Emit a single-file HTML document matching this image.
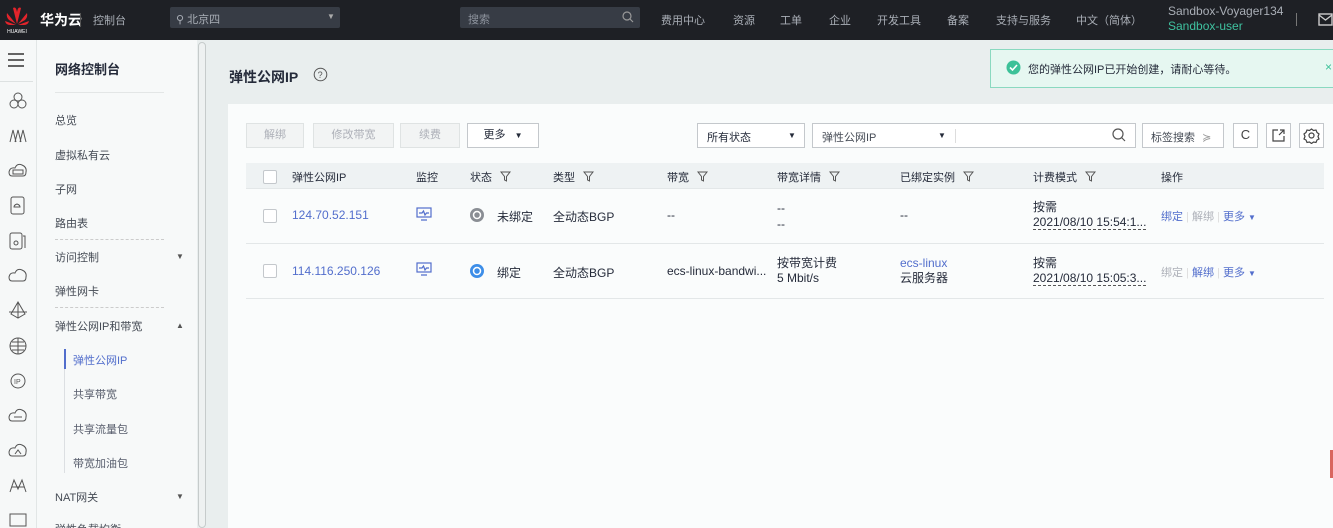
<!DOCTYPE html>
<html><head><meta charset="utf-8"><style>
*{box-sizing:border-box;margin:0;padding:0}
html,body{width:1333px;height:528px;overflow:hidden}
body{position:relative;background:#e9eeee;font-family:"Liberation Sans","Noto Sans CJK SC",sans-serif;font-size:12px;color:#252b3a}
.a{position:absolute;white-space:nowrap}
.top{left:0;top:0;width:1333px;height:40px;background:#1e2025}
.nav{color:#a9aeb6;font-size:11px;top:12px}
.side{left:0;top:40px;width:37px;height:488px;background:#f6f8f8;border-right:1px solid #e2e6e6}
.menu{left:37px;top:40px;width:160px;height:488px;background:#f7f9f9}
.mi{left:55px;font-size:11px;color:#454b55}
.sub{left:73px;font-size:11px;color:#575d6c}
.panel{left:228px;top:104px;width:1105px;height:424px;background:#fafcfc}
.btn{top:123px;height:25px;border:1px solid #dfe3e3;background:#f2f4f4;color:#adb0b8;text-align:center;line-height:23px;font-size:11px}
.th{top:163px;left:246px;width:1078px;height:26px;background:#eef2f3}
.h{top:169px;font-size:11px;color:#252b3a}
.row{left:246px;width:1078px;border-bottom:1px solid #e3e7e8}
.cb{width:14px;height:14px;border:1px solid #c4c8cc;background:#fff;border-radius:2px}
.lnk{color:#526ecc}
.f{display:inline-block;margin-left:8px;width:11px;height:11px;vertical-align:-1px}
</style></head><body>
<div class="a top"></div>
<svg class="a" style="left:4px;top:4px" width="26" height="30" viewBox="0 0 26 30"><g fill="#e3242b"><path d="M13 20 L9 4 Q12 2 13 8Z"/><path d="M13 20 L17 4 Q14 2 13 8Z"/><path d="M12 20 L3 9 Q2 13 5 16Z"/><path d="M14 20 L23 9 Q24 13 21 16Z"/><path d="M12 21 L1 17 Q2 21 6 21Z"/><path d="M14 21 L25 17 Q24 21 20 21Z"/></g><text x="13" y="29" font-size="5" fill="#fff" text-anchor="middle" font-family="Liberation Sans">HUAWEI</text></svg>
<div class="a" style="left:40px;top:10px;color:#fff;font-size:14px;font-weight:bold">华为云</div>
<div class="a" style="left:80px;top:13px;width:1px;height:14px;background:#555"></div>
<div class="a nav" style="left:93px">控制台</div>
<div class="a" style="left:170px;top:7px;width:170px;height:21px;background:#373c45;border-radius:2px"></div>
<div class="a" style="left:176px;top:11px;color:#a9aeb6;font-size:11px">⚲ 北京四</div>
<div class="a" style="left:327px;top:12px;color:#aaa;font-size:8px">▼</div>
<div class="a" style="left:460px;top:7px;width:180px;height:21px;background:#373c45;border-radius:2px"></div>
<div class="a" style="left:468px;top:11px;color:#8d939d;font-size:11px">搜索</div>
<svg class="a" style="left:622px;top:11px" width="12" height="12"><circle cx="5" cy="5" r="4" fill="none" stroke="#999" stroke-width="1.2"/><path d="M8 8l3 3" stroke="#999" stroke-width="1.2"/></svg>
<div class="a nav" style="left:661px">费用中心</div>
<div class="a nav" style="left:733px">资源</div>
<div class="a nav" style="left:780px">工单</div>
<div class="a nav" style="left:829px">企业</div>
<div class="a nav" style="left:877px">开发工具</div>
<div class="a nav" style="left:947px">备案</div>
<div class="a nav" style="left:996px">支持与服务</div>
<div class="a nav" style="left:1076px">中文（简体）</div>
<div class="a" style="left:1168px;top:4px;color:#a9aeb6;font-size:12px">Sandbox-Voyager134</div>
<div class="a" style="left:1168px;top:19px;color:#3fc2a0;font-size:12px">Sandbox-user</div>
<div class="a" style="left:1296px;top:13px;width:1px;height:13px;background:#777"></div>
<svg class="a" style="left:1318px;top:13px" width="15" height="13"><rect x="1" y="1" width="13" height="11" fill="none" stroke="#ccc" stroke-width="1.4"/><path d="M1 2l6.5 5 6.5-5" fill="none" stroke="#ccc" stroke-width="1.3"/></svg>

<div class="a side"></div>
<svg class="a" style="left:7px;top:52px" width="18" height="16"><path d="M1 2h16M1 8h16M1 14h16" stroke="#333" stroke-width="1.6"/></svg>
<div class="a" style="left:0;top:81px;width:33px;height:1px;background:#dde1e1"></div>
<svg class="a" style="left:0;top:90px" width="36" height="440" fill="none" stroke="#555" stroke-width="1">
<g transform="translate(9,2)"><circle cx="9" cy="5" r="4"/><circle cx="5" cy="12" r="4"/><circle cx="13" cy="12" r="4"/></g>
<g transform="translate(9,37)"><path d="M1 15 L4 3 L7 15 M6 15 L9 3 L12 15 M11 15 L14 3 L17 15"/></g>
<g transform="translate(9,72)"><path d="M3 14 Q0 14 0 10 Q1 5 6 6 Q8 1 13 3 Q18 5 17 10 Q17 14 14 14Z"/><rect x="4" y="8" width="10" height="4"/></g>
<g transform="translate(10,107)"><rect x="1" y="0" width="13" height="17" rx="2"/><path d="M4 10q0-2 3-3 3 1 3 3z"/></g>
<g transform="translate(9,142)"><rect x="1" y="1" width="12" height="16" rx="2"/><path d="M14 4h2v12"/><circle cx="7" cy="11" r="2"/></g>
<g transform="translate(9,177)"><path d="M3 14 Q0 14 0 10 Q1 5 6 6 Q8 1 13 3 Q18 5 17 10 Q17 14 14 14Z"/></g>
<g transform="translate(9,212)"><path d="M9 0 L2 12 L9 16 L16 12 Z M9 0 V16 M0 10 H18"/></g>
<g transform="translate(9,247)"><circle cx="9" cy="9" r="8"/><path d="M1 9h16M9 1v16M3 5h12M3 13h12"/></g>
<g transform="translate(9,282)"><circle cx="9" cy="9" r="7"/><text x="5" y="12" font-size="7" fill="#555" stroke="none">IP</text></g>
<g transform="translate(9,317)"><path d="M3 14 Q0 14 0 10 Q1 5 6 6 Q8 1 13 3 Q18 5 17 10 Q17 14 14 14Z"/><path d="M5 10h8"/></g>
<g transform="translate(9,352)"><path d="M3 14 Q0 14 0 10 Q1 5 6 6 Q8 1 13 3 Q18 5 17 10 Q17 14 14 14Z"/><path d="M6 12l3-4 3 4"/></g>
<g transform="translate(9,387)"><path d="M1 15 L5 3 L9 12 L13 3 L17 15 M3 10 h12"/></g>
<g transform="translate(9,422)"><rect x="1" y="2" width="16" height="12"/></g>
</svg>

<div class="a menu"></div>
<div class="a" style="left:55px;top:59px;font-size:13px;font-weight:bold;color:#252b3a">网络控制台</div>
<div class="a" style="left:55px;top:92px;width:109px;height:1px;background:#e3e6e6"></div>
<div class="a mi" style="top:112px">总览</div>
<div class="a mi" style="top:147px">虚拟私有云</div>
<div class="a mi" style="top:181px">子网</div>
<div class="a mi" style="top:215px">路由表</div>
<div class="a" style="left:55px;top:239px;width:109px;border-top:1px dashed #ccc"></div>
<div class="a mi" style="top:249px">访问控制</div><div class="a" style="left:176px;top:252px;font-size:8px;color:#555">▼</div>
<div class="a mi" style="top:283px">弹性网卡</div>
<div class="a" style="left:55px;top:307px;width:109px;border-top:1px dashed #ccc"></div>
<div class="a mi" style="top:318px">弹性公网IP和带宽</div><div class="a" style="left:176px;top:321px;font-size:8px;color:#555">▲</div>
<div class="a" style="left:64px;top:349px;width:1px;height:124px;background:#dcdfe2"></div>
<div class="a" style="left:64px;top:349px;width:2px;height:20px;background:#526ecc"></div>
<div class="a sub" style="top:352px;color:#526ecc">弹性公网IP</div>
<div class="a sub" style="top:386px">共享带宽</div>
<div class="a sub" style="top:421px">共享流量包</div>
<div class="a sub" style="top:455px">带宽加油包</div>
<div class="a mi" style="top:489px">NAT网关</div><div class="a" style="left:176px;top:492px;font-size:8px;color:#555">▼</div>
<div class="a mi" style="top:521px">弹性负载均衡</div>
<div class="a" style="left:198px;top:42px;width:8px;height:486px;border:1px solid #c6cbcb;border-radius:4px;background:#eef1f1"></div>

<div class="a" style="left:229px;top:67px;font-size:14px;font-weight:bold;color:#252b3a">弹性公网IP</div>
<svg class="a" style="left:313px;top:67px" width="15" height="15"><circle cx="7.5" cy="7.5" r="6.3" fill="none" stroke="#555" stroke-width="1"/><text x="4.6" y="11" font-size="9" fill="#555" font-family="Liberation Sans">?</text></svg>

<div class="a" style="left:990px;top:49px;width:343px;height:39px;background:#e6f7f1;border:1px solid #8ad9c0;border-right:none"></div>
<svg class="a" style="left:1006px;top:60px" width="15" height="15"><circle cx="7.5" cy="7.5" r="7" fill="#3cc198"/><path d="M4 7.5l2.5 2.5 4.5-5" stroke="#fff" stroke-width="1.6" fill="none"/></svg>
<div class="a" style="left:1028px;top:61px;font-size:11px;color:#252b3a">您的弹性公网IP已开始创建，请耐心等待。</div>
<div class="a" style="left:1325px;top:60px;color:#3cc198;font-size:12px">×</div>

<div class="a panel"></div>
<div class="a btn" style="left:246px;width:58px">解绑</div>
<div class="a btn" style="left:313px;width:81px">修改带宽</div>
<div class="a btn" style="left:400px;width:60px">续费</div>
<div class="a btn" style="left:467px;width:72px;background:#fff;border-color:#c4c8cc;color:#252b3a">更多 <span style="font-size:8px;margin-left:6px">▼</span></div>

<div class="a" style="left:697px;top:123px;width:108px;height:25px;border:1px solid #c4c8cc;background:#fff"></div>
<div class="a" style="left:707px;top:129px;font-size:11px">所有状态</div><div class="a" style="left:788px;top:131px;font-size:8px">▼</div>
<div class="a" style="left:812px;top:123px;width:324px;height:25px;border:1px solid #c4c8cc;background:#fff"></div>
<div class="a" style="left:822px;top:129px;font-size:11px;color:#454b55">弹性公网IP</div><div class="a" style="left:938px;top:131px;font-size:8px">▼</div>
<div class="a" style="left:955px;top:129px;width:1px;height:14px;background:#ddd"></div>
<svg class="a" style="left:1112px;top:128px" width="14" height="14"><circle cx="6" cy="6" r="5" fill="none" stroke="#555" stroke-width="1.2"/><path d="M9.5 9.5l3.5 3.5" stroke="#555" stroke-width="1.2"/></svg>
<div class="a" style="left:1142px;top:123px;width:82px;height:25px;border:1px solid #c4c8cc;background:#fff"></div>
<div class="a" style="left:1151px;top:129px;font-size:11px;color:#454b55">标签搜索 <span style="color:#999;margin-left:4px">≽</span></div>
<div class="a" style="left:1233px;top:123px;width:25px;height:25px;border:1px solid #c4c8cc;background:#fff;text-align:center;line-height:22px;font-size:13px;color:#444">C</div>
<div class="a" style="left:1266px;top:123px;width:25px;height:25px;border:1px solid #c4c8cc;background:#fff"></div>
<svg class="a" style="left:1271px;top:128px" width="15" height="15" fill="none" stroke="#444" stroke-width="1.2"><path d="M7 2H2v11h11V8M9 2h4v4M13 2L8 7"/></svg>
<div class="a" style="left:1299px;top:123px;width:25px;height:25px;border:1px solid #c4c8cc;background:#fff"></div>
<svg class="a" style="left:1303px;top:127px" width="17" height="17" fill="none" stroke="#444" stroke-width="1.2"><circle cx="8.5" cy="8.5" r="2.5"/><path d="M8.5 2l2 1.5 2.5-.5 1 2.5 2 1.5-1 2.5 1 2.5-2 1-1 2.5-2.5-.5-2 1.5-2-1.5-2.5.5-1-2.5-2-1 1-2.5-1-2.5 2-1.5 1-2.5 2.5.5z"/></svg>

<div class="a th"></div>
<div class="a cb" style="left:263px;top:170px"></div>
<div class="a h" style="left:292px">弹性公网IP</div>
<div class="a h" style="left:416px">监控</div>
<div class="a h" style="left:470px">状态<svg class="f" viewBox="0 0 11 11"><path d="M1 1h9L6.5 5.5V10L4.5 9V5.5z" fill="none" stroke="#555"/></svg></div>
<div class="a h" style="left:553px">类型<svg class="f" viewBox="0 0 11 11"><path d="M1 1h9L6.5 5.5V10L4.5 9V5.5z" fill="none" stroke="#555"/></svg></div>
<div class="a h" style="left:667px">带宽<svg class="f" viewBox="0 0 11 11"><path d="M1 1h9L6.5 5.5V10L4.5 9V5.5z" fill="none" stroke="#555"/></svg></div>
<div class="a h" style="left:777px">带宽详情<svg class="f" viewBox="0 0 11 11"><path d="M1 1h9L6.5 5.5V10L4.5 9V5.5z" fill="none" stroke="#555"/></svg></div>
<div class="a h" style="left:900px">已绑定实例<svg class="f" viewBox="0 0 11 11"><path d="M1 1h9L6.5 5.5V10L4.5 9V5.5z" fill="none" stroke="#555"/></svg></div>
<div class="a h" style="left:1033px">计费模式<svg class="f" viewBox="0 0 11 11"><path d="M1 1h9L6.5 5.5V10L4.5 9V5.5z" fill="none" stroke="#555"/></svg></div>
<div class="a h" style="left:1161px">操作</div>
<div class="a" style="left:246px;top:188px;width:1078px;height:1px;background:#e3e7e8"></div>

<div class="a row" style="top:189px;height:55px"></div>
<div class="a cb" style="left:263px;top:209px"></div>
<div class="a lnk" style="left:292px;top:208px">124.70.52.151</div>
<svg class="a" style="left:416px;top:207px" width="16" height="14" fill="none" stroke="#526ecc" stroke-width="1.2"><rect x="1" y="1" width="14" height="9"/><path d="M3 6h3l1.5-2 1.5 4 1.5-2H13M5 13h6"/></svg>
<svg class="a" style="left:470px;top:208px" width="14" height="14"><circle cx="7" cy="7" r="7" fill="#8a8e94"/><circle cx="7" cy="7" r="3.5" fill="none" stroke="#fff" stroke-width="1.5"/></svg>
<div class="a" style="left:497px;top:208px">未绑定</div>
<div class="a" style="left:553px;top:208px">全动态BGP</div>
<div class="a" style="left:667px;top:208px">--</div>
<div class="a" style="left:777px;top:200px;line-height:16px">--<br>--</div>
<div class="a" style="left:900px;top:208px">--</div>
<div class="a" style="left:1033px;top:200px;line-height:15px">按需<br><span style="border-bottom:1px dashed #555">2021/08/10 15:54:1...</span></div>
<div class="a" style="left:1161px;top:208px;font-size:11px"><span class="lnk">绑定</span> <span style="color:#ddd">|</span> <span style="color:#adb0b8">解绑</span> <span style="color:#ddd">|</span> <span class="lnk">更多 <span style="font-size:8px">▼</span></span></div>

<div class="a row" style="top:244px;height:55px"></div>
<div class="a cb" style="left:263px;top:264px"></div>
<div class="a lnk" style="left:292px;top:264px">114.116.250.126</div>
<svg class="a" style="left:416px;top:262px" width="16" height="14" fill="none" stroke="#526ecc" stroke-width="1.2"><rect x="1" y="1" width="14" height="9"/><path d="M3 6h3l1.5-2 1.5 4 1.5-2H13M5 13h6"/></svg>
<svg class="a" style="left:470px;top:264px" width="14" height="14"><circle cx="7" cy="7" r="7" fill="#3d8ee8"/><circle cx="7" cy="7" r="3.5" fill="none" stroke="#fff" stroke-width="1.5"/></svg>
<div class="a" style="left:497px;top:264px">绑定</div>
<div class="a" style="left:553px;top:264px">全动态BGP</div>
<div class="a" style="left:667px;top:264px">ecs-linux-bandwi...</div>
<div class="a" style="left:777px;top:256px;line-height:15px">按带宽计费<br>5 Mbit/s</div>
<div class="a" style="left:900px;top:256px;line-height:15px"><span class="lnk">ecs-linux</span><br>云服务器</div>
<div class="a" style="left:1033px;top:256px;line-height:15px">按需<br><span style="border-bottom:1px dashed #555">2021/08/10 15:05:3...</span></div>
<div class="a" style="left:1161px;top:264px;font-size:11px"><span style="color:#adb0b8">绑定</span> <span style="color:#ddd">|</span> <span class="lnk">解绑</span> <span style="color:#ddd">|</span> <span class="lnk">更多 <span style="font-size:8px">▼</span></span></div>

<div class="a" style="left:1330px;top:450px;width:3px;height:28px;background:#d9665f"></div>
</body></html>
